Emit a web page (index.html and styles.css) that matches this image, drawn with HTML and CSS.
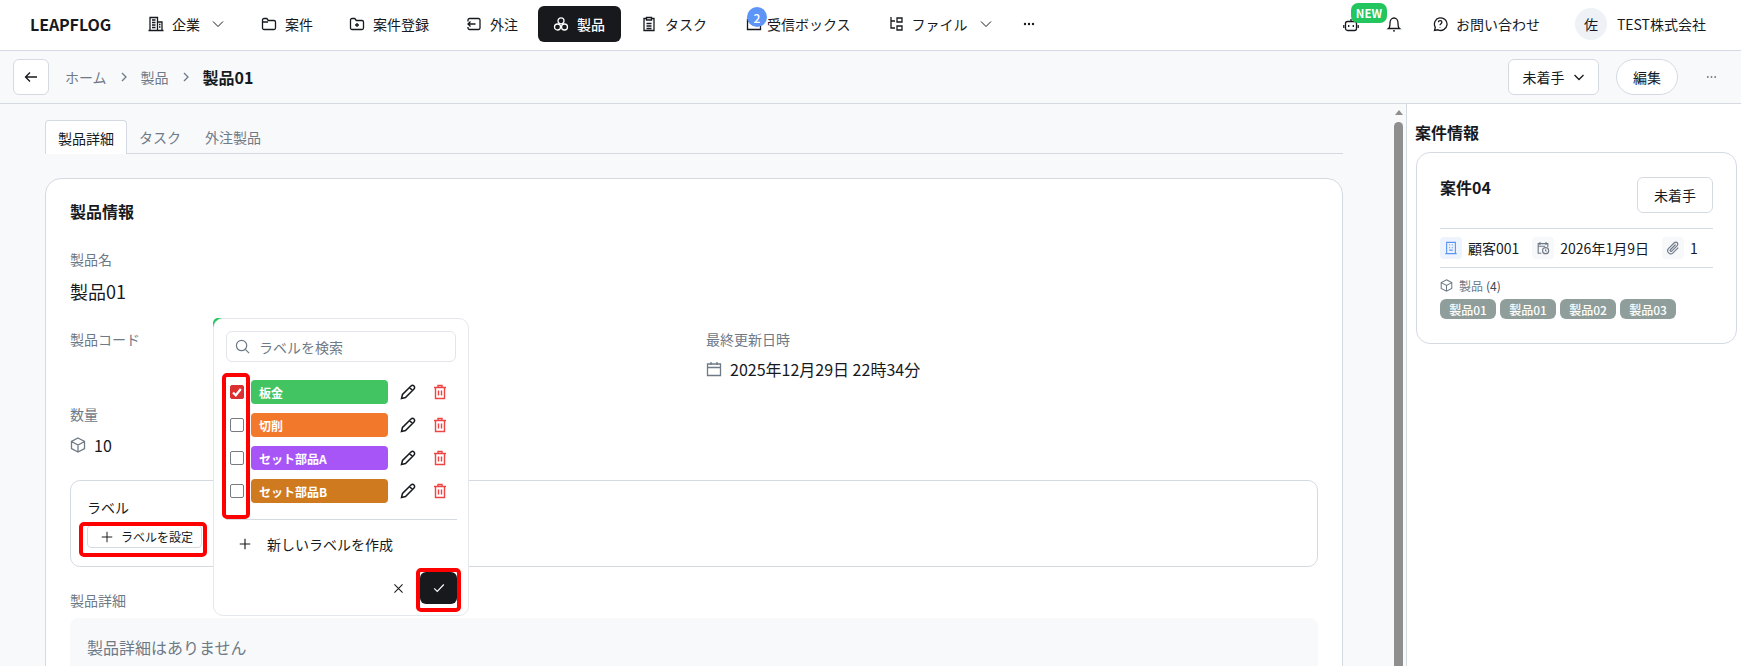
FILE: index.html
```html
<!DOCTYPE html>
<html lang="ja">
<head>
<meta charset="utf-8">
<title>製品01</title>
<link rel="stylesheet" href="styles.css">
</head>
<body>
<header class="topbar">
  <div class="logo">LEAPFLOG</div>
  <nav class="nav">
    <a class="nav-item"><svg class="ic" viewBox="0 0 16 16"><path d="M2 14.500V1.500h7.500v13M9.500 6h4.500v8.500M.5 14.500h15M4 4h3.500M4 6.500h3.500M4 9h3.500M4 11.500h3.500M11 8.500h1.500M11 11h1.500"/></svg>企業<svg class="chev" viewBox="0 0 12 12"><path d="M1 3.500l5 5 5-5"/></svg></a>
    <a class="nav-item m18"><svg class="ic" viewBox="0 0 16 16"><path d="M1.500 4a1.500 1.500 0 0 1 1.500-1.500h2.800l1.500 2H13a1.500 1.500 0 0 1 1.500 1.500v6a1.500 1.500 0 0 1-1.500 1.500H3A1.500 1.500 0 0 1 1.500 12zM1.500 6h5.500"/></svg>案件</a>
    <a class="nav-item"><svg class="ic" viewBox="0 0 16 16"><path d="M1.500 4a1.500 1.500 0 0 1 1.500-1.500h2.800l1.500 2H13a1.500 1.500 0 0 1 1.500 1.500v6a1.500 1.500 0 0 1-1.500 1.500H3A1.500 1.500 0 0 1 1.500 12zM8 7v4M6 9h4"/></svg>案件登録</a>
    <a class="nav-item m11"><svg class="ic" viewBox="0 0 16 16"><path d="M2 5.500V4a1.500 1.500 0 0 1 1.500-1.500h9A1.500 1.500 0 0 1 14 4v8a1.500 1.500 0 0 1-1.500 1.500h-9A1.500 1.500 0 0 1 2 12v-1M9.500 8H2M4.500 5.500L2 8l2.500 2.500"/></svg>外注</a>
    <a class="nav-item active"><svg class="ic" viewBox="0 0 16 16"><circle cx="8" cy="4.800" r="3"/><circle cx="4.500" cy="11" r="3"/><circle cx="11.500" cy="11" r="3"/></svg>製品</a>
    <a class="nav-item m22"><svg class="ic" viewBox="0 0 16 16"><path d="M5.500 2.500H3v12h10v-12h-2.500M5.500 1.500h5v2.500h-5zM5.500 7.500h5M5.500 10h5M5.500 12.500h5"/></svg>タスク</a>
    <a class="nav-item inbox"><svg class="ic" viewBox="0 0 16 16"><path d="M1.500 3.500h13v10h-13zM1.500 4.500l6.500 4.500 6.500-4.500"/></svg><span class="count">2</span>受信ボックス</a>
    <a class="nav-item m11"><svg class="ic" viewBox="0 0 16 16"><path d="M3 1v11h4M3 5h4M9 2h5v4H9zM9 10h5v4H9z"/></svg>ファイル<svg class="chev" viewBox="0 0 12 12"><path d="M1 3.500l5 5 5-5"/></svg></a>
    <svg class="dots" viewBox="0 0 12 4"><circle cx="2" cy="2" r="1.200"/><circle cx="6" cy="2" r="1.200"/><circle cx="10" cy="2" r="1.200"/></svg>
  </nav>
  <div class="top-right">
    <span class="bot"><svg class="ic" viewBox="0 0 16 16"><rect x="2.500" y="5.500" width="11" height="9" rx="2"/><path d="M8 5.500V3M5.700 9v2M10.300 9v2M.8 9v3M15.200 9v3"/></svg><span class="new">NEW</span></span>
    <svg class="ic bell" viewBox="0 0 16 16"><path d="M2.500 12.500c1.500-1 1.500-3 1.500-5.500 0-3 1.800-5 4-5s4 2 4 5c0 2.500 0 4.500 1.500 5.500zM7 14.800h2"/></svg>
    <a class="help"><svg class="ic" viewBox="0 0 16 16"><path d="M2.500 14.500l.8-3.200A6.300 6.300 0 1 1 6 13.800zM6.300 6.200c.2-2.200 3.600-2 3.600 0 0 1.500-1.900 1.500-1.900 3M8 11v.5"/></svg>お問い合わせ</a>
    <span class="avatar">佐</span>
    <span class="company">TEST株式会社</span>
  </div>
</header>

<div class="subbar">
  <button class="back"><svg class="ic" viewBox="0 0 16 16"><path d="M14 8H2.500M7 3.500L2.500 8 7 12.500"/></svg></button>
  <div class="crumbs">
    <span>ホーム</span><svg class="sep" viewBox="0 0 6 10"><path d="M1 1l4 4-4 4"/></svg>
    <span>製品</span><svg class="sep" viewBox="0 0 6 10"><path d="M1 1l4 4-4 4"/></svg>
    <strong>製品01</strong>
  </div>
  <div class="sub-actions">
    <button class="status">未着手<svg class="chev small" viewBox="0 0 12 12"><path d="M1.500 4l4.500 4.500L10.500 4"/></svg></button>
    <button class="edit">編集</button>
    <svg class="more" viewBox="0 0 12 4"><circle cx="2" cy="2" r="1"/><circle cx="6" cy="2" r="1"/><circle cx="10" cy="2" r="1"/></svg>
  </div>
</div>

<div class="main">
  <section class="content">
    <div class="tabs">
      <span class="tab on">製品詳細</span>
      <span class="tab">タスク</span>
      <span class="tab">外注製品</span>
    </div>
    <article class="card">
      <h2>製品情報</h2>
      <div class="field first">
        <div class="lbl">製品名</div>
        <div class="name">製品01</div>
      </div>
      <div class="two">
        <div class="field code">
          <div class="lbl">製品コード</div>
        </div>
        <div class="field">
          <div class="lbl">最終更新日時</div>
          <div class="val"><svg class="ic muted" viewBox="0 0 16 16"><path d="M1.500 3h13v11.500h-13zM1.500 6.500h13M5 1v3M11 1v3"/></svg>2025年12月29日 22時34分</div>
        </div>
      </div>
      <div class="field qty">
        <div class="lbl">数量</div>
        <div class="val"><svg class="ic muted" viewBox="0 0 16 16"><path d="M8 1l6.500 3.500v7L8 15l-6.500-3.500v-7zM1.500 4.500L8 8l6.500-3.500M8 8v7"/></svg>10</div>
      </div>
      <div class="label-box">
        <div class="label-title">ラベル</div>
        <button class="set-label"><svg class="ic" viewBox="0 0 16 16"><path d="M8 1v14M1 8h14"/></svg>ラベルを設定</button>
      </div>
      <div class="lbl detail-lbl">製品詳細</div>
      <div class="detail-empty">製品詳細はありません</div>
    </article>

    <span class="behind"></span>
    <div class="popover">
      <div class="search"><svg class="ic" viewBox="0 0 16 16"><circle cx="7" cy="7" r="5.500"/><path d="M11 11l4 4"/></svg>ラベルを検索</div>
      <ul class="opts">
        <li class="opt"><span class="check on"><svg viewBox="0 0 12 12"><path d="M2 6.500l2.800 2.800 5-6.300"/></svg></span><span class="tag green">板金</span><svg class="pen" viewBox="0 0 16 16"><path d="M1.500 14.500l1-4L11 2a2 2 0 0 1 3 3l-8.500 8.500zM9.500 3.500l3 3"/></svg><svg class="trash" viewBox="0 0 14 16"><path d="M1 3.500h12M5 3.500V1.500h4v2M2.500 3.500v11h9v-11M5.500 6.500v5M8.500 6.500v5"/></svg></li>
        <li class="opt"><span class="check"></span><span class="tag orange">切削</span><svg class="pen" viewBox="0 0 16 16"><path d="M1.500 14.500l1-4L11 2a2 2 0 0 1 3 3l-8.500 8.500zM9.500 3.500l3 3"/></svg><svg class="trash" viewBox="0 0 14 16"><path d="M1 3.500h12M5 3.500V1.500h4v2M2.500 3.500v11h9v-11M5.500 6.500v5M8.500 6.500v5"/></svg></li>
        <li class="opt"><span class="check"></span><span class="tag purple">セット部品A</span><svg class="pen" viewBox="0 0 16 16"><path d="M1.500 14.500l1-4L11 2a2 2 0 0 1 3 3l-8.500 8.500zM9.500 3.500l3 3"/></svg><svg class="trash" viewBox="0 0 14 16"><path d="M1 3.500h12M5 3.500V1.500h4v2M2.500 3.500v11h9v-11M5.500 6.500v5M8.500 6.500v5"/></svg></li>
        <li class="opt"><span class="check"></span><span class="tag brown">セット部品B</span><svg class="pen" viewBox="0 0 16 16"><path d="M1.500 14.500l1-4L11 2a2 2 0 0 1 3 3l-8.500 8.500zM9.500 3.500l3 3"/></svg><svg class="trash" viewBox="0 0 14 16"><path d="M1 3.500h12M5 3.500V1.500h4v2M2.500 3.500v11h9v-11M5.500 6.500v5M8.500 6.500v5"/></svg></li>
      </ul>
      <div class="create"><svg class="ic" viewBox="0 0 16 16"><path d="M8 2v12M2 8h12"/></svg>新しいラベルを作成</div>
      <div class="pop-actions">
        <svg class="ic close" viewBox="0 0 16 16"><path d="M3 3l10 10M13 3L3 13"/></svg>
        <button class="ok"><svg class="ic" viewBox="0 0 16 16"><path d="M2.500 8.500l3.500 3.500 7.500-8"/></svg></button>
      </div>
    </div>
    <span class="mark mark-checks"></span>
    <span class="mark mark-set"></span>
    <span class="mark mark-ok"></span>
  </section>

  <div class="scrollbar"><span class="arrow"></span><span class="thumb"></span></div>

  <aside class="side">
    <h3>案件情報</h3>
    <div class="side-card">
      <div class="side-head">
        <strong>案件04</strong>
        <button class="side-status">未着手</button>
      </div>
      <div class="meta">
        <span class="chip-ic blue"><svg class="ic" viewBox="0 0 16 16"><path d="M3 14.500v-13h10v13M1.500 14.500h13M6 4.500h1M9 4.500h1M6 7.500h1M9 7.500h1M6 10.500h4"/></svg></span><span class="meta-t">顧客001</span>
        <span class="chip-ic"><svg class="ic" viewBox="0 0 16 16"><path d="M6 14H2.500V3h11v4M4.500 1v3.500M11.500 1v3.500M2.500 6h8"/><circle cx="11" cy="11" r="3.500"/><path d="M11 9.500V11l1 .8"/></svg></span><span class="meta-t">2026年1月9日</span>
        <span class="chip-ic"><svg class="ic" viewBox="0 0 16 16"><path d="M14 7.500l-6 6a3.500 3.500 0 0 1-5-5l6.500-6.500a2.300 2.300 0 0 1 3.300 3.300L6.500 11.500a1 1 0 0 1-1.500-1.500L11 4"/></svg></span><span class="meta-t">1</span>
      </div>
      <div class="prod-head"><svg class="ic" viewBox="0 0 16 16"><path d="M8 1l6.500 3.500v7L8 15l-6.500-3.500v-7zM1.500 4.500L8 8l6.500-3.500M8 8v7"/></svg><span class="gray">製品</span> (4)</div>
      <div class="chips">
        <span class="pchip">製品01</span>
        <span class="pchip">製品01</span>
        <span class="pchip">製品02</span>
        <span class="pchip">製品03</span>
      </div>
    </div>
  </aside>
</div>
</body>
</html>
```

FILE: styles.css
```css
* { box-sizing: border-box; margin: 0; padding: 0; }
html, body { height: 100%; overflow: hidden; }
body {
  width: 1741px; height: 666px;
  display: flex; flex-direction: column;
  font-family: "Noto Sans CJK JP", "Noto Sans", sans-serif;
  color: #16191d; background: #f8f9fb; font-size: 14px;
}
ul { list-style: none; }
button { font-family: inherit; color: inherit; background: #fff; cursor: pointer; }
svg { fill: none; stroke: currentColor; stroke-width: 1.3; flex: none; }
.ic { width: 16px; height: 16px; display: block; }

/* top bar */
.topbar {
  height: 51px; flex: none; display: flex; align-items: center;
  background: #fff; border-bottom: 1px solid #d5dae2; padding: 0 0 2px 30px;
}
.logo { font-size: 16px; font-weight: 600; width: 109px; letter-spacing: -.1px; }
.nav { display: flex; align-items: center; }
.nav-item {
  height: 36px; display: flex; align-items: center; gap: 8px; padding: 0 9px;
  border-radius: 6px; font-size: 14px; position: relative; white-space: nowrap; margin-right: 19px;
}
.m18 { margin-right: 18px; }
.m11 { margin-right: 11px; }
.m22 { margin-right: 22px; }
.chev { width: 12px; height: 12px; margin-left: 4px; stroke-width: 1; }
.nav-item.active { background: #17191c; color: #fff; font-weight: 500; padding: 0 16px 0 15px; margin-right: 11px; }
.nav-item.inbox { gap: 5px; margin-right: 19px; padding-left: 8px; }
.count {
  position: absolute; left: 9px; top: 1px; width: 20px; height: 20px; border-radius: 50%;
  background: #5d95f7; color: #fff; font-size: 12px; font-weight: 500; display: flex; align-items: center; justify-content: center;
}
.dots { width: 12px; height: 4px; fill: #16191d; stroke: none; margin-left: 11px; }
.top-right { margin-left: auto; display: flex; align-items: center; }
.bot { position: relative; display: block; margin-right: 27px; }
.new {
  position: absolute; left: 8px; top: -13px; width: 36px; height: 20px; border-radius: 7px;
  background: #22c55e; color: #fff; font-size: 11.500px; font-weight: 600;
  display: flex; align-items: center; justify-content: center;
}
.bell { margin-right: 30px; }
.help { display: flex; align-items: center; gap: 8px; margin-right: 35px; }
.avatar {
  width: 32px; height: 32px; border-radius: 50%; background: #eef1f6;
  display: flex; align-items: center; justify-content: center; margin-right: 10px;
}
.company { margin-right: 35px; }

/* sub bar */
.subbar {
  height: 53px; flex: none; display: flex; align-items: center;
  border-bottom: 1px solid #d5dae2; padding: 0 24px 0 13px; background: #f8f9fb;
}
.back {
  width: 36px; height: 36px; border: 1px solid #d5dae2; border-radius: 6px;
  display: flex; align-items: center; justify-content: center; margin-right: 16px;
}
.crumbs { display: flex; align-items: center; color: #6f7a87; font-size: 14px; }
.crumbs strong { color: #16191d; font-size: 16px; font-weight: 600; }
.sep { width: 6px; height: 10px; margin: 0 14px; }
.sub-actions { margin-left: auto; display: flex; align-items: center; }
.status {
  width: 91px; height: 36px; border: 1px solid #d5dae2; border-radius: 6px; font-size: 14px;
  display: flex; align-items: center; justify-content: center; gap: 6px; margin-right: 17px;
}
.chev.small { margin-left: 2px; stroke-width: 1.3; }
.edit { width: 62px; height: 36px; border: 1px solid #d5dae2; border-radius: 18px; font-size: 14px; margin-right: 28px; }
.more { width: 11px; height: 4px; fill: #6f7a87; stroke: none; }

/* main */
.main { flex: 1; min-height: 0; display: flex; position: relative; }
.content { width: 1394px; flex: none; padding: 16px 51px 0 45px; position: relative; overflow: hidden; }
.tabs { display: flex; height: 34px; border-bottom: 1px solid #d5dae2; }
.tab { padding: 0 12px; display: flex; align-items: center; color: #6f7a87; font-size: 14px; }
.tab.on {
  background: #fff; color: #16191d; border: 1px solid #d5dae2; border-bottom: none;
  border-radius: 4px 4px 0 0; width: 82px; height: 34px; justify-content: center; padding: 0;
}
.card {
  margin-top: 24px; background: #fff; border: 1px solid #d5dae2; border-radius: 16px;
  padding: 21px 24px 0; height: 600px;
}
.card h2 { font-size: 16px; font-weight: 600; line-height: 22px; }
.field.first { margin-top: 27px; }
.lbl { color: #6f7a87; font-size: 14px; line-height: 20px; }
.name { font-size: 18px; line-height: 26px; margin-top: 9px; }
.two { display: flex; margin-top: 25px; }
.two .code { width: 636px; }
.val { display: flex; align-items: center; gap: 8px; font-size: 16px; line-height: 24px; margin-top: 8px; }
.muted { color: #6f7a87; }
.qty { margin-top: 23px; }
.qty .val { margin-top: 9px; }
.label-box {
  margin-top: 23px; height: 87px; border: 1px solid #d5dae2; border-radius: 10px; padding: 16px 16px 0;
}
.label-title { font-size: 14px; line-height: 20px; }
.set-label {
  margin-top: 8px; width: 115px; height: 23px; border: 1px solid #d5dae2; border-radius: 4px;
  display: flex; align-items: center; gap: 8px; padding-left: 13px; font-size: 12px;
}
.set-label .ic { width: 12px; height: 12px; }
.detail-lbl { margin-top: 23px; }
.detail-empty {
  margin-top: 8px; height: 80px; background: #f8f9fb; border-radius: 8px;
  padding: 17px 17px; color: #6f7a87; font-size: 16px; line-height: 24px;
}

/* popover */
.behind { position: absolute; left: 213px; top: 214px; width: 20px; height: 20px; background: #22c55e; border-radius: 5px; }
.popover {
  position: absolute; left: 213px; top: 214px; width: 256px; height: 298px;
  background: #fff; border: 1px solid #e4e7ec; border-radius: 10px; padding: 12px;
}
.search {
  width: 230px; height: 31px; border: 1px solid #e2e6ec; border-radius: 6px;
  display: flex; align-items: center; gap: 9px; padding-left: 8px; color: #6f7a87; font-size: 14px;
}
.search .ic { width: 15px; height: 15px; }
.opts { margin-top: 18px; display: flex; flex-direction: column; gap: 9px; height: 140px; border-bottom: 1px solid #d5dae2; width: 231px; }
.opt { display: flex; align-items: center; height: 24px; }
.check {
  width: 14px; height: 14px; border: 1px solid #767b82; border-radius: 2px; margin-left: 4px; background: #fff; flex: none;
}
.check.on { background: #dc2f2f; border-color: #dc2f2f; color: #fff; }
.check svg { display: block; width: 12px; height: 12px; stroke-width: 2.200; }
.tag {
  width: 137px; height: 24px; border-radius: 4px; margin-left: 7px; padding-left: 8px; color: #fff;
  font-size: 12px; font-weight: 700; display: flex; align-items: center;
}
.green { background: #43c463; }
.orange { background: #f2792c; }
.purple { background: #a855f7; }
.brown { background: #d07a20; }
.pen { width: 16px; height: 16px; margin-left: 12px; color: #16191d; stroke-width: 1.500; }
.trash { width: 14px; height: 16px; margin-left: 17px; color: #ef4444; stroke-width: 1.400; }
.create { display: flex; align-items: center; gap: 15px; height: 48px; padding-left: 12px; font-size: 14px; }
.create .ic { width: 14px; height: 14px; }
.pop-actions { display: flex; align-items: center; justify-content: flex-end; gap: 15px; height: 34px; margin-top: 3px; width: 231px; }
.close { width: 13px; height: 13px; }
.ok {
  width: 37px; height: 32px; background: #17191c; color: #fff; border: none; border-radius: 6px;
  display: flex; align-items: center; justify-content: center;
}
.ok .ic { width: 14px; height: 14px; }

/* red annotations */
.mark { position: absolute; border: 4px solid #f00; border-radius: 5px; pointer-events: none; }
.mark-checks { left: 222px; top: 269px; width: 28px; height: 146px; }
.mark-set { left: 79px; top: 418px; width: 128px; height: 35px; }
.mark-ok { left: 416px; top: 464px; width: 45px; height: 44px; }

/* scrollbar */
.scrollbar { width: 12px; flex: none; position: relative; background: #f8f9fb; }
.arrow {
  position: absolute; left: 1px; top: 6px; width: 0; height: 0;
  border-left: 4px solid transparent; border-right: 4px solid transparent; border-bottom: 5px solid #8f8f8f;
}
.thumb { position: absolute; left: 0; top: 18px; width: 9px; bottom: 0; background: #8f8f8f; border-radius: 5px 5px 0 0; }

/* side panel */
.side { flex: 1; min-width: 0; background: #fff; border-left: 1px solid #d5dae2; padding: 16px 4px 0 9px; }
.side h3 { font-size: 16px; font-weight: 600; line-height: 24px; margin-left: -1px; }
.side-card {
  margin-top: 8px; height: 192px; border: 1px solid #d5dae2; border-radius: 14px; padding: 24px 23px 0;
}
.side-head { display: flex; justify-content: space-between; align-items: flex-start; height: 52px; border-bottom: 1px solid #d5dae2; }
.side-head strong { font-size: 16px; font-weight: 600; line-height: 24px; margin-top: -2px; }
.side-status { width: 76px; height: 36px; border: 1px solid #d5dae2; border-radius: 6px; font-size: 14px; }
.meta { display: flex; align-items: center; height: 39px; border-bottom: 1px solid #d5dae2; font-size: 14px; }
.chip-ic {
  width: 22px; height: 22px; border-radius: 4px; background: #f6f8fa; color: #6f7a87;
  display: flex; align-items: center; justify-content: center; margin-right: 6px;
}
.chip-ic .ic { width: 14px; height: 14px; }
.chip-ic.blue { background: #eef4fd; color: #5d95f7; }
.meta-t { margin-right: 13px; }
.prod-head { display: flex; align-items: center; gap: 6px; font-size: 12px; margin-top: 8px; height: 18px; color: #3d4651; }
.prod-head .ic { width: 13px; height: 13px; color: #6f7a87; }
.gray { color: #6f7a87; margin-right: -3px; }
.chips { display: flex; gap: 4px; margin-top: 5px; }
.pchip {
  height: 20px; width: 56px; border-radius: 6px; background: #8f9e9a; color: #fff; font-size: 12px; font-weight: 500;
  display: flex; align-items: center; justify-content: center;
}
```
